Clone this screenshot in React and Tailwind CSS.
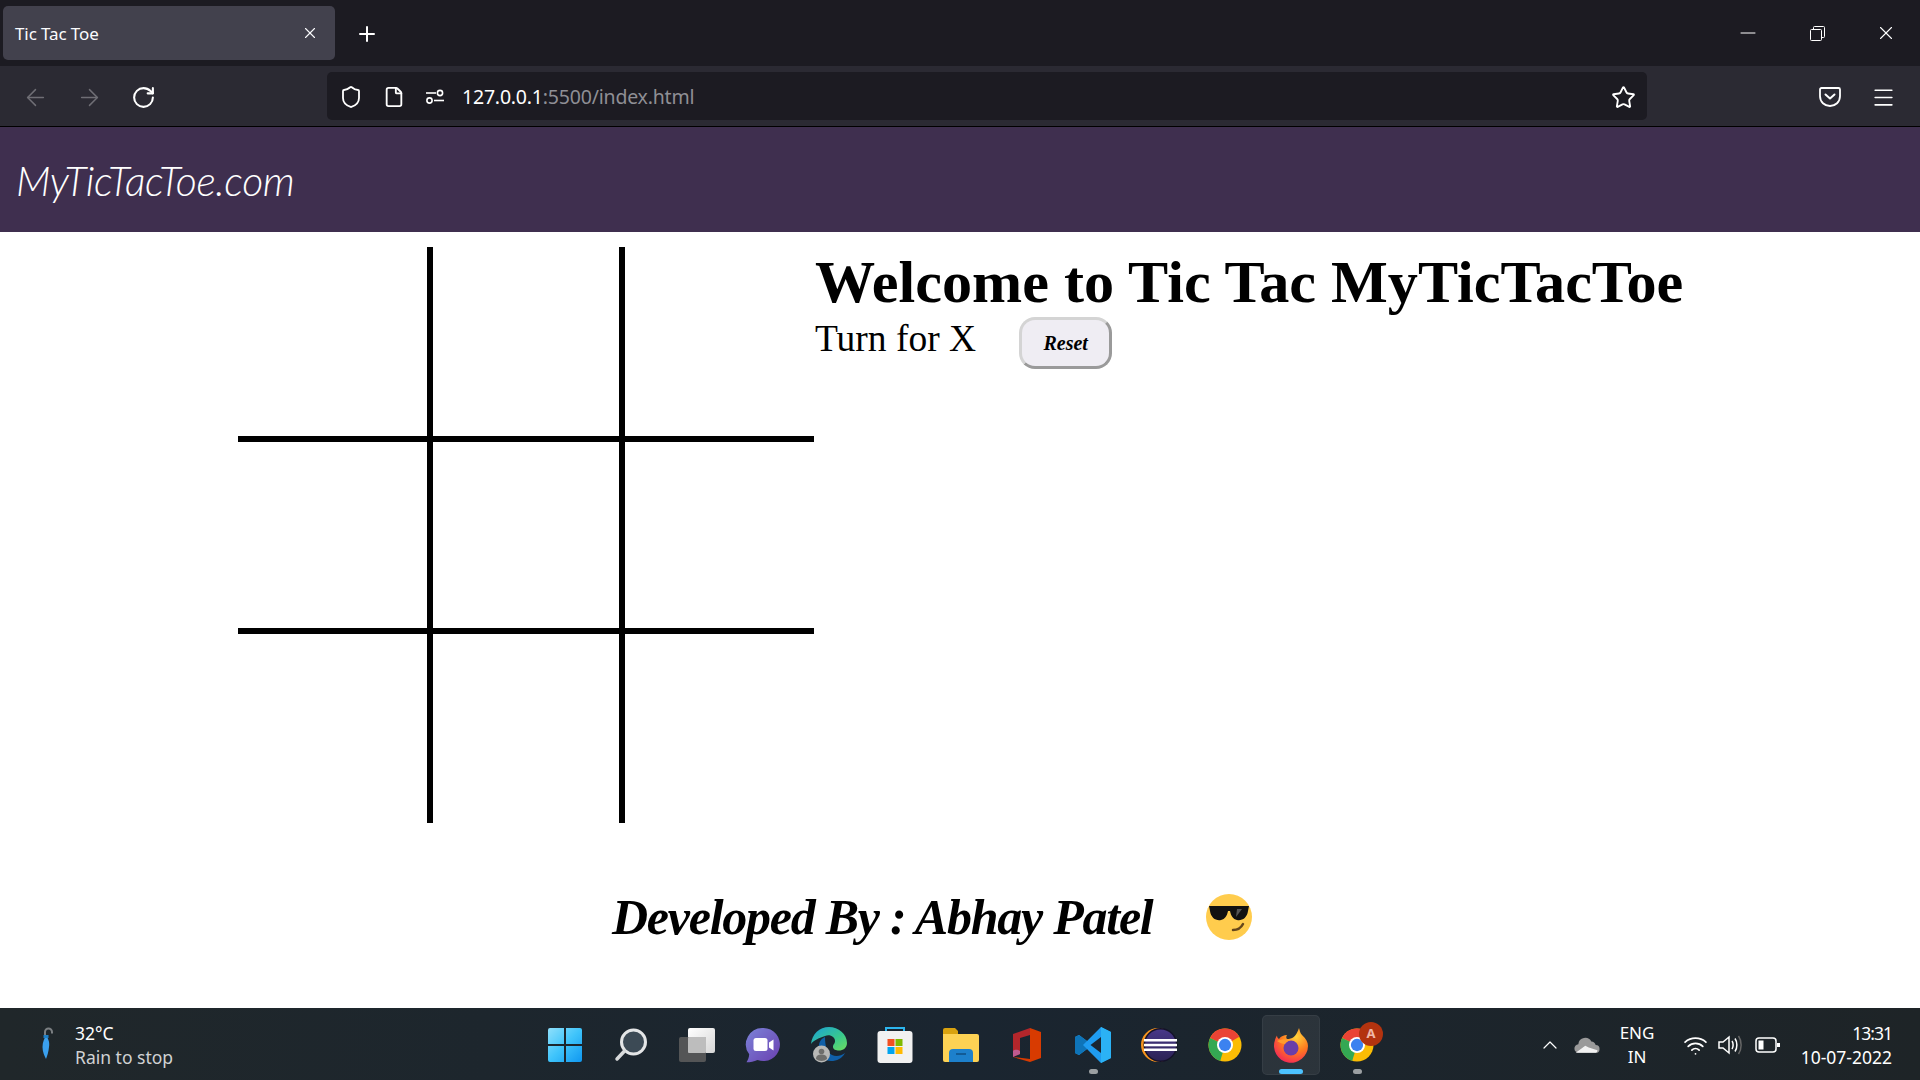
import { ArrowLeft, ArrowRight, RotateCw, Shield, File, Star, Menu, Plus, X, Minus, ChevronUp, Wifi } from "lucide-react";

const uiFont = "font-['Noto_Sans','Open_Sans',sans-serif]";

function PermissionsIcon() {
  return (
    <svg width="20" height="20" viewBox="0 0 20 20" fill="none" stroke="white" strokeWidth="1.6">
      <path d="M1 6h10" />
      <circle cx="15" cy="6" r="2.6" />
      <circle cx="4.5" cy="13.5" r="2.6" />
      <path d="M9 13.5h10" />
    </svg>
  );
}

function PocketIcon() {
  return (
    <svg width="24" height="24" viewBox="0 0 24 24" fill="none" stroke="white" strokeWidth="1.8" strokeLinecap="round" strokeLinejoin="round">
      <path d="M3.5 3h17a1.5 1.5 0 0 1 1.5 1.5V11c0 6-4.5 10-10 10S2 17 2 11V4.5A1.5 1.5 0 0 1 3.5 3z" />
      <path d="M7.5 9.5l4.5 4 4.5-4" strokeWidth="2" />
    </svg>
  );
}

function RestoreIcon() {
  return (
    <svg width="15" height="15" viewBox="0 0 15 15" fill="none" stroke="white" strokeWidth="1">
      <rect x="0.5" y="3.5" width="11" height="11" rx="1" />
      <path d="M3.5 3.5V1.5a1 1 0 0 1 1-1h9a1 1 0 0 1 1 1v9a1 1 0 0 1-1 1h-2" />
    </svg>
  );
}

function Umbrella() {
  return (
    <svg width="16" height="36" viewBox="0 0 16 36">
      <path d="M5 10V5a3.5 3.5 0 0 1 7 0v1.5" fill="none" stroke="#7b7f82" strokeWidth="2" />
      <path d="M5 9c2 2 4 6 3 11-.4 5-1.800 9-3 12-1.500-3-3.500-7-3.500-12S3.500 11 5 9z" fill="#3aa0ee" transform="translate(1 0)" />
      <rect x="3.500" y="8" width="5" height="3" fill="#1e7fc4" />
    </svg>
  );
}

function WindowsIcon() {
  return (
    <svg width="36" height="36" viewBox="0 0 36 36">
      <defs>
        <linearGradient id="win" x1="0" y1="0" x2="1" y2="1">
          <stop offset="0" stopColor="#8fe0fb" />
          <stop offset="0.5" stopColor="#3fc4fb" />
          <stop offset="1" stopColor="#0f97f0" />
        </linearGradient>
      </defs>
      <path fill="url(#win)" d="M1 3a2 2 0 0 1 2-2h14v16H1zM19 1h14a2 2 0 0 1 2 2v14H19zM1 19h16v16H3a2 2 0 0 1-2-2zM19 19h16v14a2 2 0 0 1-2 2H19z" />
    </svg>
  );
}

function SearchIcon() {
  return (
    <svg width="36" height="36" viewBox="0 0 36 36" fill="none">
      <circle cx="20.500" cy="15" r="12" fill="#3c4a55" stroke="#e4e6e7" strokeWidth="3" />
      <path d="M11.500 24L4 32" stroke="#d8dadb" strokeWidth="3.500" strokeLinecap="round" />
    </svg>
  );
}

function TaskViewIcon() {
  return (
    <svg width="38" height="36" viewBox="0 0 38 36">
      <defs>
        <linearGradient id="tv" x1="0" y1="0" x2="1" y2="1">
          <stop offset="0" stopColor="#ffffff" />
          <stop offset="1" stopColor="#d6d6d6" />
        </linearGradient>
      </defs>
      <rect x="10" y="1" width="27" height="25" rx="2" fill="url(#tv)" />
      <rect x="1" y="10" width="27" height="25" rx="2" fill="#5b5b5b" fillOpacity="0.9" />
      <rect x="10" y="10" width="18" height="16" rx="1" fill="#bdbdbd" />
    </svg>
  );
}

function ChatIcon() {
  return (
    <svg width="36" height="36" viewBox="0 0 36 36">
      <defs>
        <linearGradient id="chat" x1="0" y1="0" x2="1" y2="1">
          <stop offset="0" stopColor="#7b83d8" />
          <stop offset="1" stopColor="#6a3fb0" />
        </linearGradient>
      </defs>
      <path fill="url(#chat)" d="M18.500 1a16.500 16.500 0 1 1-6 31.900C9 34.500 5.500 35.300 1.500 35.300c1.700-2.700 2.600-5.300 2.700-8A16.500 16.500 0 0 1 18.500 1z" />
      <rect x="8.500" y="11" width="14" height="13" rx="2.500" fill="white" />
      <path d="M24 15.500l4.500-3v11l-4.500-3z" fill="white" />
    </svg>
  );
}

function EdgeIcon() {
  return (
    <svg width="38" height="38" viewBox="0 0 38 38">
      <defs>
        <linearGradient id="edge" x1="0" y1="0" x2="1" y2="1">
          <stop offset="0" stopColor="#1a9fd8" />
          <stop offset="0.6" stopColor="#39c98d" />
          <stop offset="1" stopColor="#6fdc5e" />
        </linearGradient>
      </defs>
      <path fill="url(#edge)" d="M1 18C2 8 9.500 1 19 1c9.500 0 18 7 18 16 0 5-4 7.500-8 7.500-3 0-6-1-6-3.500 0-3 2-3 2-6 0-4-5-7-10-5C9.500 12 4 14 1 18z" />
      <path fill="#0f5fa8" d="M15 11c-5 2-7 7-6 13 1 6 6 11 12 11 6 0 11-2.500 14-8-4 3-9 4-13 2-4-2-7-7-7-18z" />
      <circle cx="11.500" cy="28" r="8.500" fill="#b8b8b6" />
      <circle cx="11.500" cy="25.500" r="2.800" fill="#6e6e6c" />
      <path d="M6 33c0-3.500 2.500-4.500 5.500-4.500s5.500 1 5.500 4.500a8.500 8.500 0 0 1-11 0z" fill="#6e6e6c" />
    </svg>
  );
}

function StoreIcon() {
  return (
    <svg width="36" height="38" viewBox="0 0 36 38">
      <path d="M9 6V2h18v4" fill="none" stroke="#2cb5ee" strokeWidth="2" />
      <rect x="0.500" y="5" width="35" height="32" rx="3" fill="#f1f1f1" />
      <rect x="10.500" y="13" width="7" height="7" fill="#f25022" />
      <rect x="18.500" y="13" width="7" height="7" fill="#7fba00" />
      <rect x="10.500" y="21" width="7" height="7" fill="#00a4ef" />
      <rect x="18.500" y="21" width="7" height="7" fill="#ffb900" />
    </svg>
  );
}

function FolderIcon() {
  return (
    <svg width="38" height="36" viewBox="0 0 38 36">
      <path d="M1 3a2 2 0 0 1 2-2h10l3 3v6H1z" fill="#d9a20f" />
      <path d="M1 7h34a2 2 0 0 1 2 2v24a2 2 0 0 1-2 2H3a2 2 0 0 1-2-2z" fill="#fdd254" />
      <path d="M7 35V26a4 4 0 0 1 4-4h16a4 4 0 0 1 4 4v9z" fill="#1d80cc" />
      <path d="M14 27h10" stroke="#0f4f85" strokeWidth="1.500" />
    </svg>
  );
}

function OfficeIcon() {
  return (
    <svg width="30" height="36" viewBox="0 0 30 36">
      <path d="M18 1l11 4v26l-11 4-17-5 17 2z" fill="#d83b01" />
      <path d="M1 7l17-6v7L8 11v16l-7 3z" fill="#b3262b" />
      <path d="M1 24c2-2 5-1 7 0v3l-7 3z" fill="#c05a8f" />
    </svg>
  );
}

function VsCodeIcon() {
  return (
    <svg width="38" height="38" viewBox="0 0 38 38">
      <path d="M27 1l10 5v26l-10 5-14-14-8 6-4-2V11l4-2 8 6z" fill="#1f9cf0" />
      <path d="M27 1l10 5v26l-10 5z" fill="#2bb2f5" />
      <path d="M27 11L16.500 19 27 27z" fill="#1b2530" />
      <path d="M5 9l8 6-4 4 4 4-8 6-4-2V11z" fill="#0e74b8" />
    </svg>
  );
}

function EclipseIcon() {
  return (
    <svg width="38" height="36" viewBox="0 0 38 36">
      <defs>
        <linearGradient id="ecl" x1="0" y1="0" x2="0" y2="1">
          <stop offset="0" stopColor="#473788" />
          <stop offset="1" stopColor="#2c2255" />
        </linearGradient>
      </defs>
      <circle cx="18" cy="18" r="17" fill="#f7941e" />
      <circle cx="20.500" cy="18" r="17" fill="#14122a" />
      <circle cx="20.500" cy="18" r="15.500" fill="url(#ecl)" />
      <rect x="4" y="12" width="33" height="2.500" fill="white" />
      <rect x="4" y="16.800" width="33" height="2.500" fill="white" />
      <rect x="4" y="21.500" width="33" height="2.500" fill="white" />
    </svg>
  );
}

function ChromeIcon() {
  return (
    <svg width="34" height="34" viewBox="0 0 36 36">
      <circle cx="18" cy="18" r="17.500" fill="#fbbc04" />
      <path d="M18 18L33.200 9.300A17.500 17.500 0 0 0 2.200 10.500z" fill="#ea4335" />
      <path d="M18 18L2.200 10.500A17.500 17.500 0 0 0 13 34.800z" fill="#34a853" />
      <circle cx="18" cy="18" r="8.500" fill="white" />
      <circle cx="18" cy="18" r="6.500" fill="#3b82f0" />
    </svg>
  );
}

function FirefoxIcon() {
  return (
    <svg width="36" height="36" viewBox="0 0 36 36">
      <defs>
        <radialGradient id="ff" cx="0.65" cy="0.25" r="0.95">
          <stop offset="0" stopColor="#ffd43b" />
          <stop offset="0.45" stopColor="#ff7a1f" />
          <stop offset="0.8" stopColor="#f5334f" />
          <stop offset="1" stopColor="#e31587" />
        </radialGradient>
      </defs>
      <path d="M26 1c1 3 1 5 3 7 4 4 6 7 6 11a17 17 0 1 1-33-6c.5-2 1.500-4 2-4.500 0 2 1 3 2 3.500 2-3 5-4 8-4-1 2-1 3 0 4 5 0 9-2 12-11z" fill="url(#ff)" />
      <circle cx="18" cy="21" r="7.500" fill="#6a3ea8" />
      <path d="M4 14c4-2 9-2 14-1-3 1-5 2-6 4-3 0-5-1-8-3z" fill="#ff9b2e" />
    </svg>
  );
}

function Sunglasses() {
  return (
    <svg width="46" height="46" viewBox="0 0 46 46">
      <circle cx="23" cy="23" r="23" fill="#ffcc4d" />
      <path d="M3 12h40l-1 5c-1 7-6 10-11 9-4-1-6-4-7-9h-2c-1 5-3 8-7 9-5 1-10-2-11-9z" fill="#111" />
      <path d="M31 15l5 0-6 8z" fill="#555" />
      <path d="M27 36c5 0 8-2 10-6" fill="none" stroke="#66471b" strokeWidth="2.500" strokeLinecap="round" />
    </svg>
  );
}

const taskbarIcons = [
  { key: "windows", icon: <WindowsIcon /> },
  { key: "search", icon: <SearchIcon /> },
  { key: "taskview", icon: <TaskViewIcon /> },
  { key: "chat", icon: <ChatIcon /> },
  { key: "edge", icon: <EdgeIcon /> },
  { key: "store", icon: <StoreIcon /> },
  { key: "folder", icon: <FolderIcon /> },
  { key: "office", icon: <OfficeIcon /> },
  { key: "vscode", icon: <VsCodeIcon />, dot: true },
  { key: "eclipse", icon: <EclipseIcon /> },
  { key: "chrome", icon: <ChromeIcon /> },
  { key: "firefox", icon: <FirefoxIcon />, active: true },
  { key: "chrome2", icon: <ChromeIcon />, dot: true, badge: "A" },
];

function TabBar() {
  return (
    <div className="h-[66px] bg-[#1c1b22] flex items-center">
      <div className="ml-[3px] w-[332px] h-[54px] rounded-[5px] bg-[#42414d] flex items-center justify-between pl-3 pr-4 text-[#fbfbfe]">
        <span className={`${uiFont} text-[17px] tracking-[-0.1px] pt-[2px]`}>Tic Tac Toe</span>
        <X size={18} strokeWidth={1.500} />
      </div>
      <Plus size={24} strokeWidth={2} className="ml-5 mt-[2px] text-white" />
      <div className="ml-auto flex items-center text-white">
        <div className="w-[69px] flex justify-center pl-[1px]"><Minus size={24} strokeWidth={1} /></div>
        <div className="w-[69px] flex justify-center pl-[1px]"><RestoreIcon /></div>
        <div className="w-[69px] flex justify-center"><X size={22} strokeWidth={1.200} /></div>
      </div>
    </div>
  );
}

function Toolbar() {
  return (
    <div className="h-[61px] bg-[#2b2a33] border-b border-black flex items-center">
      <div className="flex items-center w-[327px] pl-[22px] pt-[2px] gap-[27px] text-white">
        <ArrowLeft size={27} strokeWidth={1.300} className="text-[#6f6e75]" />
        <ArrowRight size={27} strokeWidth={1.300} className="text-[#6f6e75]" />
        <RotateCw size={25} strokeWidth={2} className="ml-[1px]" />
      </div>
      <div className="w-[1320px] h-[48px] rounded-[5px] bg-[#1c1b22] flex items-center pl-[12px] pt-[2px] text-white">
        <Shield size={24} strokeWidth={1.800} />
        <File size={22} strokeWidth={2} className="ml-[20px]" />
        <span className="ml-[20px]"><PermissionsIcon /></span>
        <span className={`${uiFont} ml-[17px] text-[19.500px] tracking-[-0.2px]`}>
          127.0.0.1<span className="text-[#8f8f95]">:5500/index.html</span>
        </span>
        <Star size={25} strokeWidth={1.800} className="ml-auto mr-[11px]" />
      </div>
      <div className="flex items-center text-white ml-[171px] pt-[2px]">
        <PocketIcon />
        <Menu size={25} strokeWidth={1.600} className="ml-[29px]" />
      </div>
    </div>
  );
}

function Board() {
  return (
    <div className="grid grid-cols-[195px_192px_189px] grid-rows-[195px_192px_189px] shrink-0">
      <div className="border-r-[6px] border-b-[6px] border-black" />
      <div className="border-r-[6px] border-b-[6px] border-black" />
      <div className="border-b-[6px] border-black" />
      <div className="border-r-[6px] border-b-[6px] border-black" />
      <div className="border-r-[6px] border-b-[6px] border-black" />
      <div className="border-b-[6px] border-black" />
      <div className="border-r-[6px] border-black" />
      <div className="border-r-[6px] border-black" />
      <div />
    </div>
  );
}

function Taskbar() {
  return (
    <div className={`${uiFont} h-[72px] grid grid-cols-[1fr_858px_1fr] items-center text-white bg-gradient-to-r from-[#20272a] via-[#1a2530] to-[#1e2427]`}>
      <div className="flex items-center pl-[40px] pt-[2px]">
        <Umbrella />
        <div className="ml-[19px] text-[17.500px] leading-[24px]">
          <div>32°C</div>
          <div className="text-[#d0d2d3]">Rain to stop</div>
        </div>
      </div>
      <div className="flex h-full items-center ml-[1px] pt-[2px]">
        {taskbarIcons.map((item) => (
          <div key={item.key} className="relative w-[66px] h-[60px] shrink-0 flex items-center justify-center">
            {item.active && <div className="absolute inset-x-[4px] inset-y-0 rounded-[5px] bg-white/7 border border-white/5" />}
            <span className="relative flex">{item.icon}</span>
            {item.dot && <div className="absolute bottom-[1px] left-[29px] w-[9px] h-[5px] rounded-full bg-[#9b9fa2]" />}
            {item.active && <div className="absolute bottom-[1px] left-[21px] w-[24px] h-[5px] rounded-full bg-[#4cc2ff]" />}
            {item.badge && (
              <div className="absolute top-[7px] right-[7px] w-[24px] h-[24px] rounded-full bg-[#b3330f] flex items-center justify-center text-[13px] font-bold text-[#f0b8a8]">
                {item.badge}
              </div>
            )}
          </div>
        ))}
      </div>
      <div className="flex items-center justify-end pr-[28px] pt-[2px]">
        <ChevronUp size={24} strokeWidth={1.200} className="mr-[12px]" />
        <svg width="26" height="20" viewBox="0 0 30 22" className="mr-[12px]">
          <path d="M6 20a5 5 0 0 1-1-10 8 8 0 0 1 15-3 6 6 0 0 1 5 4 4.500 4.500 0 0 1 0 9z" fill="#9a9a9a" />
          <path d="M2 20l11-8 4 2 10 3c0 2-1 3-3 3z" fill="#f2f2f2" />
        </svg>
        <div className="w-[50px] text-center text-[17px] leading-[24px]">
          <div>ENG</div>
          <div>IN</div>
        </div>
        <Wifi size={25} strokeWidth={1.700} className="ml-[21px]" />
        <svg width="26" height="24" viewBox="0 0 26 24" fill="none" stroke="white" strokeWidth="1.500" className="ml-[9px]">
          <path d="M2 9h4l6-5v16l-6-5H2z" />
          <path d="M15 8c1.500 2 1.500 6 0 8M18 5.500c2.500 3.500 2.500 9.500 0 13" />
          <path d="M21.500 3c3.500 5 3.500 13 0 18" stroke="#666" />
        </svg>
        <svg width="26" height="18" viewBox="0 0 26 18" fill="none" stroke="white" strokeWidth="1.500" className="ml-[12px]">
          <rect x="1" y="2" width="20" height="14" rx="3" />
          <rect x="3.500" y="4.500" width="5" height="9" fill="white" stroke="none" />
          <rect x="22" y="7" width="3" height="4" fill="white" stroke="none" />
        </svg>
        <div className="ml-[11px] w-[100px] text-right text-[17.500px] leading-[24px]">
          <div className="tracking-[-1px]">13:31</div>
          <div>10-07-2022</div>
        </div>
      </div>
    </div>
  );
}

export default function App() {
  return (
    <div className="h-screen w-full overflow-hidden flex flex-col bg-white">
      <TabBar />
      <Toolbar />
      <header className="h-[105px] bg-[#3f2f4f] flex items-center pl-4">
        <span className="font-['Lato',sans-serif] font-light italic text-white text-[41px] tracking-[-0.4px] pt-[2px]">MyTicTacToe.com</span>
      </header>
      <main className="flex-1 font-['Liberation_Serif',serif] text-black">
        <div className="flex pt-[15px] pl-[238px]">
          <Board />
          <div className="pl-[1px]">
            <h1 className="font-bold text-[60.200px] leading-[68px] mt-[1px]">Welcome to Tic Tac MyTicTacToe</h1>
            <div className="flex items-start">
              <span className="text-[37.500px] leading-[44px] pt-[1px]">Turn for X</span>
              <button className="ml-[43px] mt-[1px] w-[93px] h-[52px] rounded-[16px] border-[3px] border-t-[#d4d4d4] border-l-[#d4d4d4] border-r-[#9a9a9a] border-b-[#9a9a9a] bg-[#efedf3] font-bold italic text-[20px]">
                Reset
              </button>
            </div>
          </div>
        </div>
        <div className="flex items-center pl-[612px] mt-[65px]">
          <span className="font-bold italic text-[50px] leading-[58px] tracking-[-1.250px]">Developed By : Abhay Patel</span>
          <span className="ml-[54px]"><Sunglasses /></span>
        </div>
      </main>
      <Taskbar />
    </div>
  );
}
